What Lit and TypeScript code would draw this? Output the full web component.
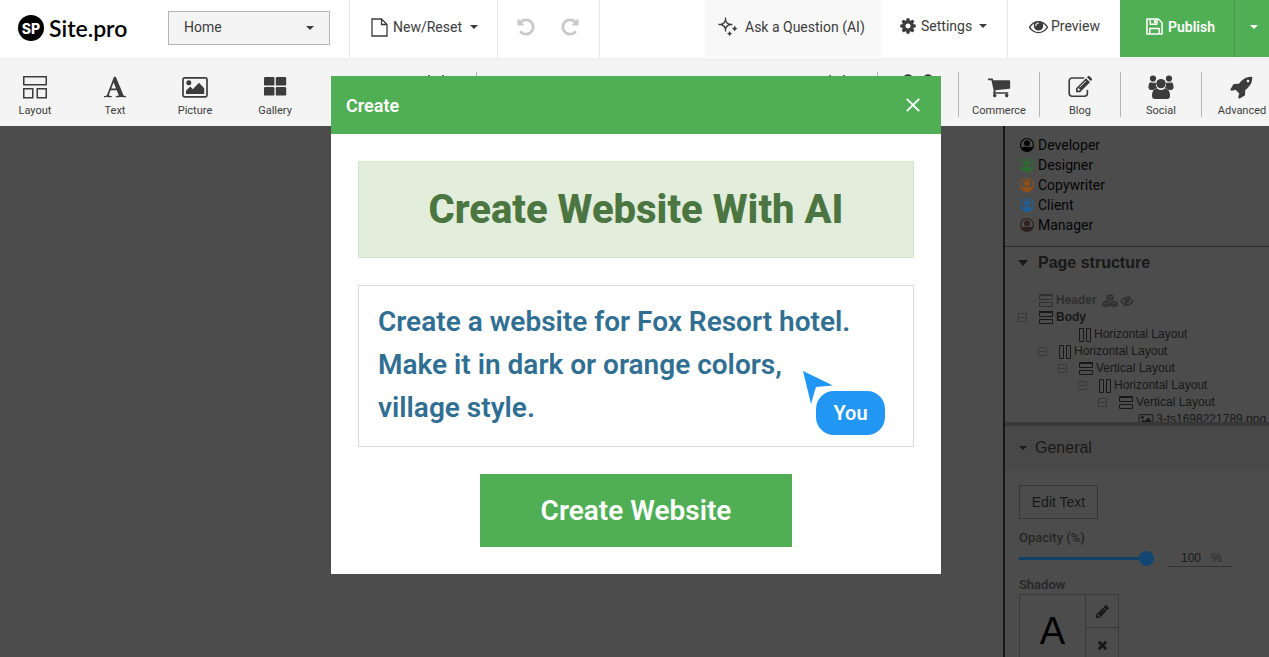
import { LitElement, html, css, svg, nothing } from "lit";
import { customElement, property, state } from "lit/decorators.js";

type Icon = { box: string; body: unknown };

const fa = (d: string): Icon => ({ box: "0 0 1792 1792", body: svg`<path fill="currentColor" d=${d}></path>` });

const UNDO =
  "M1664 896q0 156-61 298t-164 245-245 164-298 61q-172 0-327-72.5t-264-204.5q-7-10-6.5-22.5t8.5-20.5l137-138q10-9 25-9 16 2 23 12 73 95 179 147t225 52q104 0 198.5-40.5t163.5-109.5 109.5-163.5 40.5-198.5-40.5-198.5-109.5-163.5-163.5-109.5-198.5-40.5q-98 0-188 35.5t-160 101.5l137 138q31 30 14 69-17 40-59 40h-448q-26 0-45-19t-19-45v-448q0-42 40-59 39-17 69 14l130 129q107-101 244.5-156.5t284.5-55.5q156 0 298 61t245 164 164 245 61 298z";
const PENCIL =
  "M491 1536l91-91-235-235-91 91v107h128v128h107zm523-928q0-22-22-22-10 0-17 7l-542 542q-7 7-7 17 0 22 22 22 10 0 17-7l542-542q7-7 7-17zm-54-192l416 416-832 832h-416v-416zm683 96q0 53-37 90l-166 166-416-416 166-165q36-38 90-38 53 0 91 38l235 234q37 39 37 91z";

const ICONS: Record<string, Icon> = {
  cog: fa(
    "M1152 896q0-106-75-181t-181-75-181 75-75 181 75 181 181 75 181-75 75-181zm512-109v222q0 12-8 23t-20 13l-185 28q-19 54-39 91 35 50 107 138 10 12 10 25t-9 23q-27 37-99 108t-94 71q-12 0-26-9l-138-108q-44 23-91 38-16 136-29 186-7 28-36 28h-222q-14 0-24.5-8.5t-11.5-21.5l-28-184q-49-16-90-37l-141 107q-10 9-25 9-14 0-25-11-126-114-165-168-7-10-7-23 0-12 8-23 15-21 51-66.5t54-70.5q-27-50-41-99l-183-27q-13-2-21-12.5t-8-23.5v-222q0-12 8-23t19-13l186-28q14-46 39-92-40-57-107-138-10-12-10-24 0-10 9-23 26-36 98.5-107.5t94.5-71.5q13 0 26 10l138 107q44-23 91-38 16-136 29-186 7-28 36-28h222q14 0 24.5 8.5t11.5 21.5l28 184q49 16 90 37l142-107q9-9 24-9 13 0 25 10 129 119 165 170 7 8 7 22 0 12-8 23-15 21-51 66.5t-54 70.5q26 50 41 98l183 28q13 2 21 12.5t8 23.5z"
  ),
  eye: fa(
    "M1664 960q-152-236-381-353 61 104 61 225 0 185-131.5 316.5t-316.5 131.5-316.5-131.5-131.5-316.5q0-121 61-225-229 117-381 353 133 205 333.5 326.5t434.5 121.5 434.5-121.5 333.5-326.5zm-720-384q0-20-14-34t-34-14q-125 0-214.5 89.5t-89.5 214.5q0 20 14 34t34 14 34-14 14-34q0-86 61-147t147-61q20 0 34-14t14-34zm848 384q0 34-20 69-140 230-376.5 368.5t-499.5 138.5-499.5-139-376.5-368q-20-35-20-69t20-69q140-229 376.5-368t499.5-139 499.5 139 376.5 368q20 35 20 69z"
  ),
  cart: fa(
    "M704 1536q0 52-38 90t-90 38-90-38-38-90 38-90 90-38 90 38 38 90zm896 0q0 52-38 90t-90 38-90-38-38-90 38-90 90-38 90 38 38 90zm128-1088v512q0 24-16.5 42.5t-40.5 21.5l-1044 122q13 60 13 70 0 16-24 64h920q26 0 45 19t19 45-19 45-45 19h-1024q-26 0-45-19t-19-45q0-11 8-31.5t16-36 21.5-40 15.5-29.5l-177-823h-204q-26 0-45-19t-19-45 19-45 45-19h256q16 0 28.5 6.5t19.5 15.5 13 24.5 8 26 5.5 29.5 4.5 26h1201q26 0 45 19t19 45z"
  ),
  rocket: fa(
    "M1440 448q0-40-28-68t-68-28-68 28-28 68 28 68 68 28 68-28 28-68zm224-288q0 249-75.5 430.5t-253.5 360.5q-81 80-195 176l-20 379q-2 16-16 26l-384 224q-7 4-16 4-12 0-23-9l-64-64q-13-14-8-32l85-276-281-281-276 85q-3 1-9 1-14 0-23-9l-64-64q-17-19-5-39l224-384q10-14 26-16l379-20q96-114 176-195 188-187 358-258t431-71q14 0 24 9.500t10 22.500z"
  ),
  undo: fa(UNDO),
  redo: { box: "0 0 1792 1792", body: svg`<path fill="currentColor" transform="matrix(-1 0 0 1 1792 0)" d=${UNDO}></path>` },
  pencil: fa(PENCIL),
  letter: fa(
    "M789 559l-170 450q33 0 136.5 2t160.5 2q19 0 57-2-87-253-184-452zm-725 1105l2-79q23-7 56-12.5t57-10.5 49.5-14.5 44.5-29 31-50.5l237-616 280-724h128q8 14 11 21l205 480q33 78 106 257.5t114 274.5q15 34 58 144.5t72 168.5q20 45 35 57 19 15 88 29.5t84 20.5q6 38 6 57 0 4-.5 13t-.5 13q-63 0-190-8t-191-8q-76 0-215 7t-178 8q0-43 4-78l131-28q1 0 12.5-2.5t15.5-3.5 14.5-4.5 15-6.5 11-8 9-11 2.5-14q0-16-31-96.5t-72-177.5-42-100l-450-2q-26 58-76.5 195.5t-50.5 162.5q0 22 14 37.5t43.5 24.5 48.5 13.5 57 8.5 41 4q1 19 1 58 0 9-2 27-58 0-174.5-10t-174.5-10q-8 0-26.5 4t-21.5 4q-80 14-188 14z"
  ),
  layout: {
    box: "0 0 24 24",
    body: svg`<path fill="none" stroke="currentColor" stroke-width="1.5" d="M.75 1.75h22.5v8H.75zM.75 13.75h9v9h-9zM14.25 13.75h9v9h-9z"></path>`,
  },
  picture: {
    box: "0 0 26 24",
    body: svg`<rect x="1" y="2.8" width="24" height="19" rx="1.6" fill="none" stroke="currentColor" stroke-width="1.7"></rect><circle cx="6.8" cy="7.8" r="2.5" fill="currentColor"></circle><path fill="currentColor" d="M4 19v-3.2l4.2-4.2 2.6 2.6 6.2-6.4 5.2 5.4V19z"></path>`,
  },
  gallery: {
    box: "0 0 24 24",
    body: svg`<g fill="currentColor"><rect x="1" y="2" width="10.4" height="8.6" rx="1.2"></rect><rect x="12.8" y="2" width="10.4" height="8.6" rx="1.2"></rect><rect x="1" y="12" width="10.4" height="8.6" rx="1.2"></rect><rect x="12.8" y="12" width="10.4" height="8.6" rx="1.2"></rect></g>`,
  },
  blog: {
    box: "0 0 24 24",
    body: svg`<path fill="none" stroke="currentColor" stroke-width="1.6" stroke-linecap="round" d="M15.500 3H4.200A3 3 0 0 0 1.200 6v12.200a3 3 0 0 0 3 3h12.200a3 3 0 0 0 3-3V15.500"></path><path fill="currentColor" fill-rule="evenodd" d="M18 3.200l4 4-10 10H8v-4zM9.600 13.900v1.700h1.800l.8-.8-1.800-1.800zM17.600 5.700l-6.400 6.400.5.500 6.400-6.400zM19 2.200l1-1q.8-.7 1.600 0l2.200 2.200q.7.800 0 1.600l-1 1z"></path>`,
  },
  social: {
    box: "0 0 26 24",
    body: svg`<g fill="currentColor"><circle cx="5" cy="3.600" r="3.100"></circle><circle cx="21" cy="3.600" r="3.100"></circle><path d="M2.600 7.200Q5 8.400 7.800 7.400q-.4 3.600 1.600 5.800-2.600.2-4.200 1.800H2.800Q.4 15 .4 12.600q0-4.800 2.200-5.400zM23.400 7.200Q21 8.400 18.200 7.400q.4 3.600-1.600 5.800 2.600.2 4.200 1.800h2.400q2.400 0 2.400-2.400 0-4.800-2.200-5.400z"></path><circle cx="13" cy="8.600" r="4.700"></circle><path d="M9 13.400q4 3 8 0 5 .2 5 7.400 0 3.200-3 3.200H7q-3 0-3-3.200 0-7.200 5-7.400z"></path></g>`,
  },
  peaks: { box: "0 0 24 24", body: svg`<path fill="none" stroke="currentColor" d="M1 22L5 3l7 16L19 3l4 19"></path>` },
  duo: {
    box: "0 0 30 24",
    body: svg`<g fill="currentColor"><circle cx="5" cy="7" r="4.800"></circle><circle cx="25" cy="7" r="4.800"></circle><path d="M0 13h11v10H0zM19 13h11v10H19z"></path></g>`,
  },
  page: {
    box: "0 0 17 19",
    body: svg`<path fill="none" stroke="currentColor" stroke-width="1.300" d="M1 1h9.500L16 6.500V18H1zM10.500 1v5.500H16"></path>`,
  },
  sparkle: {
    box: "0 0 20 20",
    body: svg`<path fill="none" stroke="currentColor" stroke-width="1.300" stroke-linejoin="round" d="M7.500 2.600Q8.200 6.800 12.400 7.500 8.200 8.200 7.500 12.400 6.800 8.200 2.600 7.500 6.800 6.800 7.500 2.600zM7.500 .6v2M7.500 12.400v2M.4 7.500h2.200M12.400 7.500h2"></path><path fill="currentColor" d="M16.700 8.600q.5 2.500 3 3-2.500.5-3 3-.5-2.500-3-3 2.500-.5 3-3zM11.600 14q.5 2.100 2.600 2.600-2.100.5-2.600 2.600-.5-2.100-2.600-2.600 2.100-.5 2.600-2.600z"></path>`,
  },
  save: {
    box: "0 0 18 18",
    body: svg`<path fill="none" stroke="currentColor" stroke-width="1.600" stroke-linejoin="round" d="M1 1h12l4 4v12H1zM4.500 1v5.500h7V1M4 17v-6h10v6"></path><path fill="currentColor" d="M8.400 2h2v3.500h-2z"></path>`,
  },
  user: {
    box: "0 0 16 16",
    body: svg`<circle cx="8" cy="8" r="6.500" fill="none" stroke="currentColor" stroke-width="1.200"></circle><circle cx="8" cy="6.200" r="2.900" fill="currentColor"></circle><path fill="currentColor" d="M2 11q2-1.300 3.800-1.600 2.200 1.300 4.400 0Q12 9.700 14 11 12 14.500 8 14.500T2 11z"></path>`,
  },
  vertical: {
    box: "0 0 16 14",
    body: svg`<path fill="none" stroke="currentColor" d="M1.500 1.500h13v4h-13zM1.500 8.500h13v4h-13zM1 .500h14"></path>`,
  },
  horizontal: {
    box: "0 0 14 14",
    body: svg`<path fill="none" stroke="currentColor" d="M1.500 .5h4v13h-4zM8.500 .5h4v13h-4z"></path>`,
  },
  minus: { box: "0 0 9 9", body: svg`<path fill="none" stroke="currentColor" d="M.5 .5h8v8h-8zM2 4.500h5"></path>` },
  cubes: {
    box: "0 0 16 14",
    body: svg`<path fill="currentColor" d="M8 0l3.600 1.600v4L8 7.200 4.400 5.600v-4zM4 6.400L7.700 8v4L4 13.600.3 12V8zM12 6.400L15.700 8v4L12 13.600 8.300 12V8z"></path><path fill="none" stroke="#4c4c4c" stroke-width=".700" d="M5.500 2.300L8 3.300l2.500-1M8 3.500v3M1.500 8.700L4 9.700l2.500-1M4 9.900v3M9.500 8.700l2.500 1 2.500-1M12 9.900v3"></path>`,
  },
  hidden: {
    box: "0 0 14 14",
    body: svg`<path fill="none" stroke="currentColor" stroke-width="1.300" d="M1 7.500q6-8 12 0-6 7-12 0z"></path><circle cx="7" cy="7" r="2.300" fill="currentColor"></circle><path stroke="currentColor" stroke-width="1.300" d="M10 1.500L4.500 12.500"></path>`,
  },
  close: { box: "0 0 14 14", body: svg`<path stroke="currentColor" stroke-width="1.900" d="M.8 .8l12.400 12.400M13.200 .8L.8 13.200"></path>` },
  times: { box: "0 0 12 12", body: svg`<path stroke="currentColor" stroke-width="3.200" d="M2 2l8 8M10 2l-8 8"></path>` },
  caret: { box: "0 0 8 4", body: svg`<path fill="currentColor" d="M0 0h8L4 4z"></path>` },
  caretBig: { box: "0 0 10 6", body: svg`<path fill="currentColor" d="M0 0h10L5 6z"></path>` },
  pointer: { box: "0 0 30 33", body: svg`<path fill="currentColor" d="M0 0l30 14.500-17 1.500-5 17z"></path>` },
};

@customElement("ui-icon")
export class UiIcon extends LitElement {
  static styles = css`
    :host {
      display: inline-flex;
      flex: none;
    }
    svg {
      display: block;
    }
  `;
  @property() name = "";
  @property({ type: Number }) w = 16;
  @property({ type: Number }) h = 0;

  render() {
    const icon = ICONS[this.name];
    if (!icon) return nothing;
    return html`<svg width=${this.w} height=${this.h || this.w} viewBox=${icon.box} aria-hidden="true">${icon.body}</svg>`;
  }
}

const base = css`
  :host,
  * {
    box-sizing: border-box;
  }
  button,
  input,
  select,
  textarea {
    font: inherit;
    color: inherit;
    margin: 0;
    padding: 0;
    border: 0;
    border-radius: 0;
    background: none;
    outline: none;
  }
`;

@customElement("top-bar")
export class TopBar extends LitElement {
  static styles = [
    base,
    css`
      :host {
        display: flex;
        align-items: stretch;
        height: 58px;
        background: #fff;
        color: #3c3c3c;
        font-size: 14px;
      }
      .logo {
        display: flex;
        align-items: center;
        gap: 5px;
        width: 168px;
        padding: 0 0 2px 18px;
        color: #000;
        text-decoration: none;
        font: 600 23px Lato, sans-serif;
      }
      .mark {
        display: grid;
        place-items: center;
        width: 26px;
        height: 26px;
        border-radius: 50%;
        background: #000;
        color: #fff;
        font: 800 14px Inter, sans-serif;
      }
      .picker {
        display: grid;
        align-items: center;
        width: 162px;
        height: 34px;
        margin: 11px 19px 0 0;
      }
      .picker > * {
        grid-area: 1 / 1;
      }
      .picker select {
        appearance: none;
        width: 100%;
        height: 34px;
        padding: 0 15px 2px;
        border: 1px solid #b4b4b4;
        background: #f4f4f4;
      }
      .picker ui-icon {
        justify-self: end;
        margin-right: 16px;
        pointer-events: none;
      }
      .cell {
        display: flex;
        align-items: center;
        gap: 7px;
        padding: 0 19px 4px 21px;
        border-left: 1px solid #e6e6e6;
      }
      .new {
        gap: 5px;
        width: 148px;
      }
      .history {
        gap: 24px;
        width: 102px;
        padding: 0 0 4px 18px;
        color: #c9c9c9;
      }
      .history button {
        display: flex;
      }
      .rest {
        flex: 1;
        border-left: 1px solid #e6e6e6;
      }
      .ask {
        display: flex;
        align-items: center;
        gap: 7px;
        width: 176px;
        height: 57px;
        padding: 0 0 3px 13px;
        background: #f8f8f8;
        white-space: nowrap;
      }
      .settings {
        gap: 4px;
        width: 126px;
        border-left: 0;
        padding-left: 18px;
        padding-bottom: 6px;
      }
      .preview {
        width: 113px;
        gap: 3px;
        padding-bottom: 6px;
      }
      .publish,
      .more {
        display: flex;
        align-items: center;
        height: 57px;
        padding-bottom: 4px;
        background: #50af55;
        color: #fff;
      }
      .publish {
        gap: 5px;
        width: 114px;
        padding-left: 26px;
        font-weight: 600;
      }
      .more {
        width: 35px;
        justify-content: center;
        padding-left: 4px;
        border-left: 1px solid #459649;
      }
      .arrow {
        margin-left: 3px;
      }
    `,
  ];

  render() {
    return html`
      <a class="logo" href="#"><span class="mark">SP</span>Site.pro</a>
      <label class="picker">
        <select aria-label="Page"><option>Home</option></select>
        <ui-icon name="caret" w="8" h="4"></ui-icon>
      </label>
      <button class="cell new">
        <ui-icon name="page" w="17" h="19"></ui-icon>New/Reset<ui-icon class="arrow" name="caret" w="8" h="4"></ui-icon>
      </button>
      <div class="cell history">
        <button aria-label="Undo"><ui-icon name="undo" w="20"></ui-icon></button>
        <button aria-label="Redo"><ui-icon name="redo" w="20"></ui-icon></button>
      </div>
      <div class="rest"></div>
      <button class="ask"><ui-icon name="sparkle" w="20"></ui-icon>Ask a Question (AI)</button>
      <button class="cell settings">
        <ui-icon name="cog" w="18"></ui-icon>Settings<ui-icon class="arrow" name="caret" w="8" h="4"></ui-icon>
      </button>
      <button class="cell preview"><ui-icon name="eye" w="19"></ui-icon>Preview</button>
      <button class="publish"><ui-icon name="save" w="17"></ui-icon>Publish</button>
      <button class="more" aria-label="More"><ui-icon name="caret" w="8" h="4"></ui-icon></button>
    `;
  }
}

type Tool = { icon: string; label?: string; name?: string; w?: number; cls?: string };

@customElement("tool-bar")
export class ToolBar extends LitElement {
  static styles = [
    base,
    css`
      :host {
        display: flex;
        justify-content: space-between;
        height: 68px;
        border-top: 3px solid #f1f1f1;
        background: #f4f4f4;
        color: #3c3c3c;
        font-size: 11px;
        line-height: 14px;
        overflow: hidden;
      }
      .group {
        display: flex;
        flex: none;
        padding-top: 11px;
      }
      .start {
        margin-left: -5px;
      }
      .end {
        margin-right: -13px;
      }
      .tool {
        display: flex;
        flex-direction: column;
        align-items: center;
        gap: 5px;
        width: 80px;
        height: 45px;
        padding-top: 3px;
      }
      .end .tool {
        width: 81px;
        border-left: 1px solid #b4b4b4;
      }
      .end .tool:first-child {
        border-left-color: transparent;
      }
      .start .ruled {
        width: 82px;
        border-right: 1px solid #b4b4b4;
      }
      .tall {
        padding-top: 0;
      }
    `,
  ];

  private start: Tool[] = [
    { icon: "layout", label: "Layout" },
    { icon: "letter", label: "Text" },
    { icon: "picture", label: "Picture", w: 26 },
    { icon: "gallery", label: "Gallery" },
    { icon: "gallery", name: "Media" },
    { icon: "peaks", name: "Maps", cls: "ruled tall" },
  ];
  private end: Tool[] = [
    { icon: "peaks", name: "Shapes", cls: "tall" },
    { icon: "duo", name: "Forms", w: 30, cls: "tall" },
    { icon: "cart", label: "Commerce" },
    { icon: "blog", label: "Blog" },
    { icon: "social", label: "Social", w: 26 },
    { icon: "rocket", label: "Advanced" },
  ];

  private tool(t: Tool) {
    return html`<button class="tool ${t.cls ?? ""}" aria-label=${t.label ?? t.name ?? ""}>
      <ui-icon name=${t.icon} w=${t.w ?? 24} h="24"></ui-icon>${t.label ?? nothing}
    </button>`;
  }

  render() {
    return html`
      <div class="group start">${this.start.map((t) => this.tool(t))}</div>
      <div class="group end">${this.end.map((t) => this.tool(t))}</div>
    `;
  }
}

@customElement("side-panel")
export class SidePanel extends LitElement {
  static styles = [
    base,
    css`
      :host {
        display: flex;
        flex-direction: column;
        width: 266px;
        border-left: 2px solid #161616;
        background: #4c4c4c;
        color: #181818;
        font-family: "Liberation Sans", sans-serif;
        overflow: hidden;
      }
      .roles,
      .tree,
      .settings,
      h2 {
        flex: none;
      }
      .roles {
        margin: 0;
        padding: 9px 14px 11px;
        list-style: none;
        border-bottom: 1px solid #2c2c2c;
        font: 14px/20px Roboto, sans-serif;
      }
      .roles li {
        display: flex;
        align-items: center;
        gap: 3px;
      }
      .developer {
        color: #050505;
      }
      .designer {
        color: #2c6e30;
      }
      .copywriter {
        color: #8f5017;
      }
      .client {
        color: #205f94;
      }
      .manager {
        color: #2e2221;
      }
      .name {
        color: #050505;
      }
      h2 {
        display: flex;
        align-items: center;
        margin: 0;
        font-size: 16px;
        line-height: 20px;
      }
      .structure {
        gap: 10px;
        padding: 6px 13px 19px;
      }
      .tree {
        height: 130px;
        margin: 0;
        padding: 0 0 0 13px;
        list-style: none;
        overflow: hidden;
        font-size: 12px;
        line-height: 17px;
        white-space: nowrap;
      }
      .row {
        display: flex;
        align-items: center;
        gap: 2px;
        height: 17px;
      }
      .fold {
        display: flex;
        width: 18px;
        color: #383838;
      }
      .strong {
        font-weight: 700;
      }
      .faded {
        font-weight: 700;
        color: #303030;
      }
      .badge {
        margin-left: 3px;
      }
      .general {
        gap: 8px;
        padding: 11px 14px;
        border-top: 4px solid #383838;
        background: #484848;
        font-weight: 400;
        line-height: 21px;
      }
      .settings {
        display: flex;
        flex-direction: column;
        align-items: flex-start;
        padding: 16px 14px 0;
        font-size: 12px;
        line-height: 16px;
      }
      .edit {
        width: 79px;
        height: 34px;
        border: 1px solid #363636;
        font-size: 14px;
      }
      .caption {
        color: #262626;
        font: 500 13px/16px Roboto, sans-serif;
      }
      .opacity {
        margin: 11px 0 4px;
      }
      .level {
        display: flex;
        align-items: center;
        gap: 14px;
        height: 17px;
      }
      .level input[type="range"] {
        appearance: none;
        width: 135px;
        height: 16px;
      }
      input[type="range"]::-webkit-slider-runnable-track {
        height: 3px;
        background: #133f63;
      }
      input[type="range"]::-webkit-slider-thumb {
        appearance: none;
        width: 15px;
        height: 15px;
        margin-top: -6px;
        border-radius: 50%;
        background: #124572;
      }
      .amount {
        display: flex;
        align-items: center;
        gap: 10px;
        width: 64px;
        height: 17px;
        padding-left: 13px;
        border-bottom: 1px solid #333;
      }
      .amount input {
        width: 20px;
      }
      .unit {
        color: #2a2a2a;
      }
      .shadow {
        margin: 10px 0 1px;
      }
      .box {
        display: grid;
        grid-template: 33px 34px / 66px 32px;
        border: 1px solid #3a3a3a;
      }
      .sample {
        grid-row: span 2;
        display: grid;
        place-items: center;
        padding-top: 4px;
        border-right: 1px solid #3a3a3a;
        color: #000;
        font-size: 38px;
      }
      .box button {
        display: grid;
        place-items: center;
      }
      .box .pen {
        border-bottom: 1px solid #3a3a3a;
      }
    `,
  ];

  @state() private opacity = 100;

  private roles = ["Developer", "Designer", "Copywriter", "Client", "Manager"];
  private tree = [
    { depth: 0, fold: false, kind: "vertical", text: "Header", cls: "faded" },
    { depth: 0, fold: true, kind: "vertical", text: "Body", cls: "strong" },
    { depth: 2, fold: false, kind: "horizontal", text: "Horizontal Layout", cls: "" },
    { depth: 1, fold: true, kind: "horizontal", text: "Horizontal Layout", cls: "" },
    { depth: 2, fold: true, kind: "vertical", text: "Vertical Layout", cls: "" },
    { depth: 3, fold: true, kind: "horizontal", text: "Horizontal Layout", cls: "" },
    { depth: 4, fold: true, kind: "vertical", text: "Vertical Layout", cls: "" },
    { depth: 5, fold: false, kind: "picture", text: "3-ts1698221789.png", cls: "" },
  ];

  private onOpacity(e: Event) {
    this.opacity = Number((e.target as HTMLInputElement).value);
  }

  render() {
    return html`
      <ul class="roles">
        ${this.roles.map(
          (r) => html`<li class=${r.toLowerCase()}><ui-icon name="user" w="16"></ui-icon><span class="name">${r}</span></li>`
        )}
      </ul>
      <h2 class="structure"><ui-icon name="caretBig" w="10" h="6"></ui-icon>Page structure</h2>
      <ul class="tree">
        ${this.tree.map(
          (n) => html`<li class="row ${n.cls}" style="padding-left:${n.depth * 20}px">
            <span class="fold">${n.fold ? html`<ui-icon name="minus" w="9"></ui-icon>` : nothing}</span>
            <ui-icon name=${n.kind} w=${n.kind === "horizontal" ? 14 : 16} h="14"></ui-icon>
            <span>${n.text}</span>
            ${n.cls === "faded"
              ? html`<ui-icon class="badge" name="cubes" w="16" h="14"></ui-icon><ui-icon name="hidden" w="14"></ui-icon>`
              : nothing}
          </li>`
        )}
      </ul>
      <h2 class="general"><ui-icon name="caret" w="8" h="4"></ui-icon>General</h2>
      <div class="settings">
        <button class="edit">Edit Text</button>
        <label class="caption opacity" for="opacity">Opacity (%)</label>
        <div class="level">
          <input id="opacity" type="range" min="0" max="100" .value=${String(this.opacity)} @input=${this.onOpacity} />
          <label class="amount">
            <input aria-label="Opacity value" .value=${String(this.opacity)} @change=${this.onOpacity} /><span class="unit">%</span>
          </label>
        </div>
        <span class="caption shadow">Shadow</span>
        <div class="box">
          <span class="sample">A</span>
          <button class="pen" aria-label="Edit shadow"><ui-icon name="pencil" w="15"></ui-icon></button>
          <button aria-label="Remove shadow"><ui-icon name="times" w="11"></ui-icon></button>
        </div>
      </div>
    `;
  }
}

@customElement("create-dialog")
export class CreateDialog extends LitElement {
  static styles = [
    base,
    css`
      :host {
        display: block;
        width: 610px;
        max-width: 100%;
        background: #fff;
        font-size: 28px;
      }
      .head {
        display: flex;
        align-items: center;
        justify-content: space-between;
        height: 58px;
        padding: 0 21px 0 15px;
        background: #50af55;
        color: #fff;
      }
      h1 {
        margin: 0;
        font-size: 18px;
        font-weight: 600;
      }
      .close {
        display: flex;
      }
      .body {
        display: flex;
        flex-direction: column;
        gap: 27px;
        padding: 27px;
      }
      .banner {
        margin: 0;
        padding: 24px 0;
        border: 1px solid #d7e8c8;
        background: #e2eedb;
        color: #4b7541;
        text-align: center;
        font-size: 40px;
        line-height: 47px;
        font-weight: 800;
      }
      .prompt {
        position: relative;
        display: flex;
      }
      textarea {
        width: 100%;
        height: 162px;
        padding: 14px 19px;
        border: 1px solid #dadada;
        color: #306f92;
        font-weight: 600;
        line-height: 43px;
        resize: none;
        overflow: hidden;
      }
      .cursor {
        position: absolute;
        right: 29px;
        bottom: 12px;
        padding: 20px 0 0 13px;
        color: #2196f3;
        pointer-events: none;
      }
      .arrow {
        position: absolute;
        left: 0;
        top: 0;
      }
      .you {
        display: block;
        width: 69px;
        border-radius: 18px;
        background: #2196f3;
        color: #fff;
        text-align: center;
        font-size: 20px;
        font-weight: 600;
        line-height: 44px;
      }
      .submit {
        align-self: center;
        width: 312px;
        height: 73px;
        background: #50af55;
        color: #fff;
        font-weight: 600;
      }
    `,
  ];

  private prompt = "Create a website for Fox Resort hotel.\nMake it in dark or orange colors,\nvillage style.";

  render() {
    return html`
      <div class="head">
        <h1>Create</h1>
        <button class="close" aria-label="Close"><ui-icon name="close" w="14"></ui-icon></button>
      </div>
      <div class="body">
        <h2 class="banner">Create Website With AI</h2>
        <div class="prompt">
          <textarea aria-label="Website description" spellcheck="false" .value=${this.prompt}></textarea>
          <span class="cursor"><ui-icon class="arrow" name="pointer" w="30" h="33"></ui-icon><span class="you">You</span></span>
        </div>
        <button class="submit">Create Website</button>
      </div>
    `;
  }
}

@customElement("app-root")
export class AppRoot extends LitElement {
  static styles = css`
    :host {
      position: relative;
      display: flex;
      flex-direction: column;
      height: 100vh;
      overflow: hidden;
      font-family: Roboto, sans-serif;
    }
    .work {
      display: flex;
      flex: 1;
      min-height: 0;
      justify-content: flex-end;
      background: #4c4c4c;
    }
    .layer {
      position: absolute;
      inset: 76px 0 auto 3px;
      display: flex;
      justify-content: center;
    }
  `;

  render() {
    return html`
      <top-bar></top-bar>
      <tool-bar></tool-bar>
      <main class="work"><side-panel></side-panel></main>
      <div class="layer"><create-dialog role="dialog" aria-label="Create"></create-dialog></div>
    `;
  }
}
